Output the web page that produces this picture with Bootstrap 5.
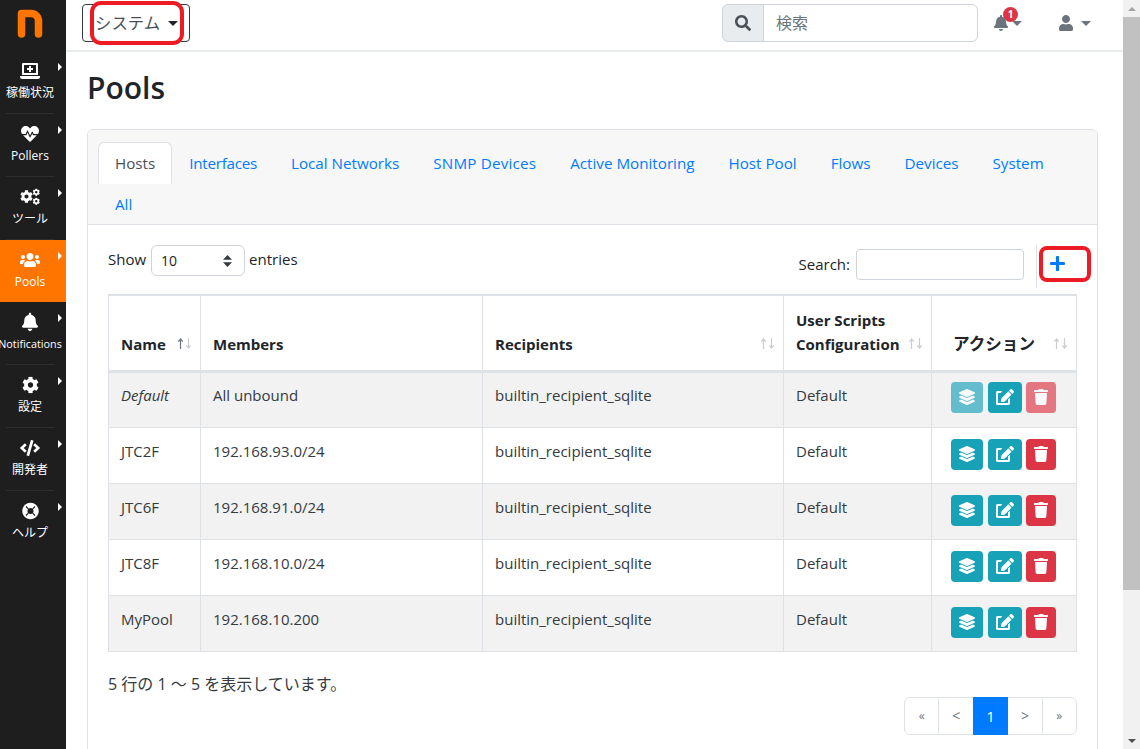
<!DOCTYPE html>
<html lang="ja">
<head>
<meta charset="utf-8">
<title>Pools</title>
<link href="https://cdn.jsdelivr.net/npm/bootstrap@5.3.0/dist/css/bootstrap.min.css" rel="stylesheet">
<style>
html,body{height:749px;overflow:hidden}
body{font-family:"Open Sans","Noto Sans CJK JP",sans-serif;font-size:15px;color:#212529;background:#fff}
a{text-decoration:none}
.shell{height:749px}
.side{width:66px;flex:none;background:#1e1e1e;color:#fff}
.logo-box{height:51px;padding-right:6px}
.side-item{height:62.85px;position:relative;color:#fff;font-size:12px;white-space:nowrap;padding:10px 6px 0 0}
.side-item::after{content:"";position:absolute;left:6px;right:12px;bottom:0;border-bottom:1px solid #2e2e2e}
.side-item:last-child::after{display:none}
.side-item.on{background:#ff7500;color:#fff}
.side-item.on::after{display:none}
.side-tri{position:absolute;left:58px;top:12px;border-left:4px solid #fff;border-top:4px solid transparent;border-bottom:4px solid transparent}
.side-ico{height:20px;margin-bottom:3px;fill:#fff}
.side-label{line-height:18px}
.side-label-long{font-size:10.8px}
.mainc{min-width:0;flex:1}
.topbar{height:52px;border-bottom:2px solid #e9ecef;padding:0 0 4px 16px;flex:none}
.sys-wrap{position:relative}
.sys-btn{width:108px;height:38px;border:1px solid #343a40;border-radius:4px;font-size:16.4px;color:#495057;padding:0 0 0 12px;background:#fff;display:flex;align-items:center;gap:8px}
.sys-btn .car{color:#212529}
.car{display:inline-block;border-top:5px solid currentColor;border-left:5px solid transparent;border-right:5px solid transparent}
.ring{position:absolute;border:4px solid #ed1c24;border-radius:11px;pointer-events:none}
.ring-sys{left:8px;top:-3px;width:94px;height:44px}
.ring-add{left:2px;top:1px;width:52px;height:36px;border-radius:8px}
.topsearch{width:256px;height:38px}
.topsearch .input-group-text{width:42px;padding:0;justify-content:center;background:#e9ecef;border-color:#ced4da}
.topsearch .form-control{font-size:16px;padding-left:12px;border-color:#ced4da}
.topsearch .form-control::placeholder{color:#6c757d}
.t-ico{fill:#6c757d}
.bell-wrap{position:relative;width:34px;margin-left:16px;color:#6c757d}
.bell-badge{position:absolute;left:9px;top:-8px;width:15px;height:15px;border-radius:50%;background:#dc3545;color:#fff;font-size:10px;font-weight:700;line-height:15px;text-align:center}
.user-wrap{margin-left:31px;margin-right:32px;color:#6c757d}
.content{padding:0 25px 0 21px;min-height:0;flex:1;overflow:hidden}
.page-h{font-size:30px;font-weight:600;line-height:38px;margin:17px 0 22px;color:#212529}
.pool-card{border-color:#dee2e6}
.pool-card .card-header{background:#f7f7f7;padding:12px 10px 0;border-color:#dee2e6}
.pool-card .nav-tabs{margin:0;border-bottom:0}
.pool-card .nav-link{padding:0 16px;height:40px;line-height:41px;font-size:15.2px;color:#007bff;margin-bottom:0;border:1px solid transparent}
.pool-card .nav-link.active{color:#495057;background:#fff;border-color:#dee2e6 #dee2e6 #fff;height:42px}
.pool-card .nav-link.tab-tight{letter-spacing:-.25px}
.pool-card .nav-link.tab-wide{letter-spacing:.2px}
.pool-card .nav-link.tab-last{line-height:39px}
.pool-body{padding:20px 21px 60px 20px}
.ctl-row{height:49px;position:relative}
.len-ctl{margin-top:-2px}
.sel10{width:94px;height:31px;font-size:14px;padding:4px 24px 4px 9px;border-color:#ced4da;display:inline-block;margin:2px 4px 0 5px;background-position:right 12px center;background-size:9px 12px;background-image:url("data:image/svg+xml,%3Csvg xmlns='http://www.w3.org/2000/svg' viewBox='0 0 9 12'%3E%3Cpath fill='%23343a40' d='M4.5 0 9 4.8H0zM4.5 12 0 7.2h9z'/%3E%3C/svg%3E")}
.right-ctl{margin-right:-13px}
.search-in{width:168px;height:31px;border:1px solid #ced4da;border-radius:4px;margin-left:6px}
.add-cell{position:relative;width:53px;height:43px;margin-left:12px;border-left:1px solid #dee2e6;display:flex;justify-content:flex-start;padding:10px 0 0 13px}
.pool-table{table-layout:fixed;width:968px;margin:0;border-color:#dee2e6;font-size:15px;border-top:2px solid #dee2e6}
.pool-table>thead>tr>th{height:76px;vertical-align:bottom;padding:0 12px 14px;line-height:24px;position:relative;font-weight:700;border-bottom:3px solid #dee2e6}
.pool-table>tbody{border-top:0}
.pool-table>tbody>tr>td{height:56px;vertical-align:top;padding:11px 12px 0;line-height:24px;color:#343a40}
.pool-table>tbody>tr>td.act{padding:11px 0 0;text-align:center}
.pool-table>tbody>tr:first-child>td{padding-top:10px}
.pool-table>tbody>tr:first-child>td.act{padding-top:9px}
.pool-table.table-striped>tbody>tr:nth-of-type(odd)>*{--bs-table-accent-bg:#f2f2f2;color:#343a40}
.w1{width:92px}.w2{width:282px}.w3{width:301px}.w4{width:148px}.w5{width:145px}
.sorts{position:absolute;right:8px;bottom:21px;width:15px;height:11px;display:flex}
.sorts svg{display:block}
.th-jp{font-size:16.6px;text-align:center;padding-right:32px!important}
.acts{display:inline-flex;gap:5px;align-items:center;margin-right:2px}
.btn-act{height:31px;padding:0;border:0;border-radius:4px;display:flex;align-items:center;justify-content:center;color:#fff}
.b-lay{width:32px;background:#17a2b8}
.b-edit{width:34px;background:#17a2b8}
.b-del{width:30px;background:#dc3545;margin-left:-1px}
.dim{opacity:.65}
.btn-act svg{fill:#fff}
.info-line{margin-top:20px;color:#343a40;line-height:24px;font-size:16px}
.pager{margin:1px -1px 0 0}
.pager .page-link{width:35.4px;height:38px;line-height:36px;text-align:center;font-size:12px;color:#6c757d;border-color:#dee2e6;padding:0;margin-left:-1px}
.pager .pg-big{font-size:14px}
.pager .active .page-link{background:#007bff;border-color:#007bff;color:#fff;font-size:15px}
.scroller{width:17px;flex:none;background:#f1f1f1}
.sc-up,.sc-dn{height:17px}
.sc-thumb{height:573px;background:#c1c1c1}
.tri-up{border-bottom:4px solid #a3a3a3;border-left:4px solid transparent;border-right:4px solid transparent}
.tri-dn{border-top:4px solid #505050;border-left:4px solid transparent;border-right:4px solid transparent}
</style>
</head>
<body>
<svg width="0" height="0" class="d-none" aria-hidden="true">
<symbol id="i-cog" viewBox="0 0 512 512"><path d="M487.4 315.7l-42.6-24.6c4.3-23.2 4.3-47 0-70.2l42.6-24.6c4.9-2.8 7.1-8.6 5.5-14-11.1-35.6-30-67.8-54.7-94.6-3.8-4.1-10-5.1-14.8-2.3L380.8 110c-17.9-15.4-38.5-27.3-60.8-35.1V25.8c0-5.6-3.9-10.5-9.4-11.7-36.7-8.2-74.3-7.8-109.2 0-5.5 1.2-9.4 6.1-9.4 11.7V75c-22.2 7.9-42.8 19.8-60.8 35.1L88.7 85.5c-4.9-2.8-11-1.9-14.8 2.3-24.7 26.7-43.6 58.9-54.7 94.6-1.7 5.4.6 11.2 5.5 14L67.3 221c-4.3 23.2-4.3 47 0 70.2l-42.6 24.6c-4.9 2.8-7.1 8.6-5.5 14 11.1 35.6 30 67.8 54.7 94.6 3.8 4.1 10 5.1 14.8 2.3l42.6-24.6c17.9 15.4 38.5 27.3 60.8 35.1v49.2c0 5.6 3.9 10.5 9.4 11.7 36.7 8.2 74.3 7.8 109.2 0 5.5-1.2 9.4-6.1 9.4-11.7v-49.2c22.2-7.9 42.8-19.8 60.8-35.1l42.6 24.6c4.9 2.8 11 1.9 14.8-2.3 24.7-26.7 43.6-58.9 54.7-94.6 1.5-5.5-.7-11.3-5.6-14.1zM256 336c-44.1 0-80-35.9-80-80s35.9-80 80-80 80 35.9 80 80-35.9 80-80 80z"/></symbol>
<symbol id="i-layer" viewBox="0 0 512 512"><path d="M12.41 148.02l232.94 105.67c6.8 3.09 14.49 3.09 21.29 0l232.94-105.67c16.55-7.51 16.55-32.52 0-40.03L266.65 2.31a25.607 25.607 0 0 0-21.29 0L12.41 107.98c-16.55 7.51-16.55 32.53 0 40.04zm487.18 88.28l-58.09-26.33-161.64 73.27c-7.56 3.43-15.59 5.17-23.86 5.17s-16.29-1.74-23.86-5.17L70.51 209.97l-58.1 26.33c-16.55 7.5-16.55 32.5 0 40l232.94 105.59c6.8 3.08 14.49 3.08 21.29 0L499.59 276.3c16.55-7.5 16.55-32.5 0-40zm0 127.8l-57.87-26.23-161.86 73.37c-7.56 3.43-15.59 5.17-23.86 5.17s-16.29-1.74-23.86-5.17L70.29 337.87 12.41 364.1c-16.55 7.5-16.55 32.5 0 40l232.94 105.59c6.8 3.08 14.49 3.08 21.29 0L499.59 404.1c16.55-7.5 16.55-32.5 0-40z"/></symbol>
<symbol id="i-edit" viewBox="0 0 576 512"><path d="M402.6 83.2l90.2 90.2c3.8 3.8 3.8 10 0 13.8L274.4 405.6l-92.8 10.3c-12.4 1.4-22.9-9.1-21.5-21.5l10.3-92.8L388.8 83.2c3.8-3.8 10-3.8 13.8 0zm162-22.9l-48.8-48.8c-15.2-15.2-39.9-15.2-55.2 0l-35.4 35.4c-3.8 3.8-3.8 10 0 13.8l90.2 90.2c3.8 3.8 10 3.8 13.8 0l35.4-35.4c15.2-15.3 15.2-40 0-55.2zM384 346.2V448H64V128h73.1c3.2 0 6.2-1.3 8.5-3.5l40-40c7.6-7.6 2.2-20.5-8.5-20.5H48C21.5 64 0 85.5 0 112v352c0 26.5 21.5 48 48 48h352c26.5 0 48-21.5 48-48V306.2c0-10.7-12.9-16-20.5-8.5l-40 40c-2.2 2.3-3.5 5.3-3.5 8.5z"/></symbol>
<symbol id="i-trash" viewBox="0 0 448 512"><path d="M432 32H312l-9.4-18.7A24 24 0 0 0 281.1 0H166.8a23.72 23.72 0 0 0-21.4 13.3L136 32H16A16 16 0 0 0 0 48v32a16 16 0 0 0 16 16h416a16 16 0 0 0 16-16V48a16 16 0 0 0-16-16zM53.2 467a48 48 0 0 0 47.9 45h245.8a48 48 0 0 0 47.9-45L416 128H32z"/></symbol>
<symbol id="i-sort" viewBox="0 0 15 11"><path d="M3.5 11V1.5M1.3 3.6 3.5 1l2.2 2.6" fill="none" stroke="currentColor" stroke-width="1.2"/><path d="M11.5 0v9.5M9.3 7.4 11.5 10l2.2-2.6" fill="none" stroke="#ccc" stroke-width="1.2"/></symbol>
</svg>
<div class="shell d-flex">
  <nav class="side d-flex flex-column">
    <div class="logo-box d-flex justify-content-center pt-2">
      <svg width="26" height="30" viewBox="0 0 26 30" aria-hidden="true"><path d="M4.5 26V5.5H14a7.5 7.5 0 0 1 7.5 7.5V26" fill="none" stroke="#ff7500" stroke-width="7.5" stroke-linecap="round" stroke-linejoin="round"/></svg>
    </div>
    <a class="side-item d-flex flex-column align-items-center" href="#"><span class="side-tri"></span>
      <svg class="side-ico" width="20" height="20" viewBox="0 0 20 20" aria-hidden="true"><path fill-rule="evenodd" d="M3 2h14a1 1 0 0 1 1 1v11H2V3a1 1 0 0 1 1-1zm1 2v8h12V4zM0 15h20v1a2 2 0 0 1-2 2H2a2 2 0 0 1-2-2z"/><path d="M9 5h2v2h2v2h-2v2H9V9H7V7h2z"/></svg>
      <span class="side-label">稼働状況</span></a>
    <a class="side-item d-flex flex-column align-items-center" href="#"><span class="side-tri"></span>
      <svg class="side-ico" width="18" height="20" viewBox="0 0 512 512" aria-hidden="true"><path d="M320.2 243.8l-49.7 99.4c-6 12.1-23.4 11.7-28.9-.6l-56.9-126.3-30 71.7H60.6l182.5 186.5c7.1 7.3 18.6 7.3 25.7 0L451.4 288H342.3l-22.1-44.2zM473.7 73.9l-2.4-2.5c-51.5-52.6-135.8-52.6-187.4 0L256 100l-27.9-28.5c-51.5-52.7-135.9-52.7-187.4 0l-2.4 2.4C-10.4 123.7-12.5 203 31 256h102.4l35.9-86.2c5.4-12.9 23.6-13.2 29.4-.4l58.2 129.3 49-97.9c5.9-11.8 22.7-11.8 28.6 0l27.6 55.2H481c43.5-53 41.4-132.3-7.3-182.1z"/></svg>
      <span class="side-label">Pollers</span></a>
    <a class="side-item d-flex flex-column align-items-center" href="#"><span class="side-tri"></span>
      <svg class="side-ico" width="20" height="20" viewBox="0 0 20 20" aria-hidden="true"><use href="#i-cog" x="0" y="3" width="13" height="13"/><use href="#i-cog" x="12.5" y="1.5" width="7.5" height="7.5"/><use href="#i-cog" x="12.5" y="10.5" width="7.5" height="7.5"/></svg>
      <span class="side-label">ツール</span></a>
    <a class="side-item on d-flex flex-column align-items-center" href="#"><span class="side-tri"></span>
      <svg class="side-ico" width="20" height="20" viewBox="0 0 640 512" aria-hidden="true"><path d="M96 224c35.3 0 64-28.7 64-64s-28.7-64-64-64-64 28.7-64 64 28.7 64 64 64zm448 0c35.3 0 64-28.7 64-64s-28.7-64-64-64-64 28.7-64 64 28.7 64 64 64zm32 32h-64c-17.6 0-33.5 7.1-45.1 18.6 40.3 22.1 68.9 62 75.1 109.4h66c17.7 0 32-14.3 32-32v-32c0-35.3-28.7-64-64-64zm-256 0c61.9 0 112-50.1 112-112S381.9 32 320 32 208 82.1 208 144s50.1 112 112 112zm76.8 32h-8.3c-20.8 10-43.9 16-68.5 16s-47.6-6-68.5-16h-8.3C179.6 288 128 339.6 128 403.2V432c0 26.5 21.5 48 48 48h288c26.5 0 48-21.5 48-48v-28.8c0-63.6-51.6-115.2-115.2-115.2zm-223.7-13.4C161.5 263.1 145.6 256 128 256H64c-35.3 0-64 28.7-64 64v32c0 17.7 14.3 32 32 32h65.9c6.3-47.4 34.9-87.3 75.2-109.4z"/></svg>
      <span class="side-label">Pools</span></a>
    <a class="side-item d-flex flex-column align-items-center" href="#"><span class="side-tri"></span>
      <svg class="side-ico" width="16" height="20" viewBox="0 0 448 512" aria-hidden="true"><path d="M224 512c35.32 0 63.97-28.65 63.97-64H160.03c0 35.35 28.65 64 63.97 64zm215.39-149.71c-19.32-20.76-55.47-51.99-55.47-154.29 0-77.7-54.48-139.9-127.94-155.16V32c0-17.67-14.32-32-31.98-32s-31.98 14.33-31.98 32v20.84C118.56 68.1 64.08 130.3 64.08 208c0 102.3-36.15 133.53-55.47 154.29-6 6.45-8.66 14.16-8.61 21.71.11 16.4 12.98 32 32.1 32h383.8c19.12 0 32-15.6 32.1-32 .05-7.55-2.61-15.27-8.61-21.71z"/></svg>
      <span class="side-label side-label-long">Notifications</span></a>
    <a class="side-item d-flex flex-column align-items-center" href="#"><span class="side-tri"></span>
      <svg class="side-ico" width="17" height="20" viewBox="0 0 512 512" aria-hidden="true"><use href="#i-cog"/></svg>
      <span class="side-label">設定</span></a>
    <a class="side-item d-flex flex-column align-items-center" href="#"><span class="side-tri"></span>
      <svg class="side-ico" width="20" height="20" viewBox="0 0 640 512" aria-hidden="true"><path d="M278.9 511.5l-61-17.7c-6.4-1.8-10-8.5-8.2-14.9L346.2 8.7c1.8-6.4 8.5-10 14.9-8.2l61 17.7c6.4 1.8 10 8.5 8.2 14.9L293.8 503.3c-1.9 6.4-8.5 10.1-14.9 8.2zm-114-112.2l43.5-46.4c4.6-4.9 4.3-12.7-.8-17.2L117 256l90.6-79.7c5.1-4.5 5.5-12.3.8-17.2l-43.5-46.4c-4.5-4.8-12.1-5.1-17-.5L3.8 247.2c-5.1 4.7-5.1 12.8 0 17.5l144.1 135.1c4.9 4.6 12.5 4.4 17-.5zm327.2.6l144.1-135.1c5.1-4.7 5.1-12.8 0-17.5L492.1 112.1c-4.8-4.5-12.4-4.3-17 .5L431.6 159c-4.6 4.9-4.3 12.7.8 17.2L523 256l-90.6 79.7c-5.1 4.5-5.5 12.3-.8 17.2l43.5 46.4c4.5 4.9 12.1 5.1 17 .6z"/></svg>
      <span class="side-label">開発者</span></a>
    <a class="side-item d-flex flex-column align-items-center" href="#"><span class="side-tri"></span>
      <svg class="side-ico" width="17" height="20" viewBox="0 0 512 512" aria-hidden="true"><path fill-rule="evenodd" d="M256 8C119 8 8 119 8 256s111 248 248 248 248-111 248-248S393 8 256 8zm0 156a92 92 0 1 1 0 184 92 92 0 0 1 0-184z"/><path d="M120 120l70 70M392 120l-70 70M120 392l70-70M392 392l-70-70" stroke="#1e1e1e" stroke-width="36" fill="none"/></svg>
      <span class="side-label">ヘルプ</span></a>
  </nav>
  <div class="mainc d-flex flex-column">
    <header class="topbar d-flex align-items-center">
      <div class="sys-wrap">
        <button class="sys-btn" type="button">システム<span class="car"></span></button>
        <span class="ring ring-sys"></span>
      </div>
      <div class="input-group topsearch ms-auto">
        <span class="input-group-text"><svg width="16" height="16" viewBox="0 0 512 512" aria-hidden="true"><path fill="#495057" d="M505 442.7L405.3 343c-4.5-4.5-10.6-7-17-7H372c27.6-35.3 44-79.7 44-128C416 93.1 322.9 0 208 0S0 93.1 0 208s93.1 208 208 208c48.3 0 92.7-16.4 128-44v16.3c0 6.4 2.5 12.5 7 17l99.7 99.7c9.4 9.4 24.6 9.4 33.9 0l28.3-28.3c9.4-9.4 9.4-24.6.1-34zM208 336c-70.7 0-128-57.2-128-128 0-70.7 57.2-128 128-128 70.7 0 128 57.2 128 128 0 70.7-57.2 128-128 128z"/></svg></span>
        <input class="form-control" type="text" placeholder="検索">
      </div>
      <div class="bell-wrap d-flex align-items-center gap-1">
        <svg class="t-ico" width="14" height="16" viewBox="0 0 448 512" aria-hidden="true"><path d="M224 512c35.32 0 63.97-28.65 63.97-64H160.03c0 35.35 28.65 64 63.97 64zm215.39-149.71c-19.32-20.76-55.47-51.99-55.47-154.29 0-77.7-54.48-139.9-127.94-155.16V32c0-17.67-14.32-32-31.98-32s-31.98 14.33-31.98 32v20.84C118.56 68.1 64.08 130.3 64.08 208c0 102.3-36.15 133.53-55.47 154.29-6 6.45-8.66 14.16-8.61 21.71.11 16.4 12.98 32 32.1 32h383.8c19.12 0 32-15.6 32.1-32 .05-7.55-2.61-15.27-8.61-21.71z"/></svg>
        <span class="car"></span>
        <span class="bell-badge">1</span>
      </div>
      <div class="user-wrap d-flex align-items-center gap-2">
        <svg class="t-ico" width="14" height="16" viewBox="0 0 448 512" aria-hidden="true"><path d="M224 256c70.7 0 128-57.3 128-128S294.7 0 224 0 96 57.3 96 128s57.3 128 128 128zm89.6 32h-16.7c-22.2 10.2-46.9 16-72.9 16s-50.6-5.8-72.9-16h-16.7C60.2 288 0 348.2 0 422.4V464c0 26.5 21.5 48 48 48h352c26.5 0 48-21.5 48-48v-41.6c0-74.2-60.2-134.4-134.4-134.4z"/></svg>
        <span class="car"></span>
      </div>
    </header>
    <main class="content">
      <h1 class="page-h">Pools</h1>
      <div class="card pool-card">
        <div class="card-header">
          <ul class="nav nav-tabs">
            <li class="nav-item"><a class="nav-link active" href="#">Hosts</a></li>
            <li class="nav-item"><a class="nav-link tab-tight" href="#">Interfaces</a></li>
            <li class="nav-item"><a class="nav-link" href="#">Local Networks</a></li>
            <li class="nav-item"><a class="nav-link tab-wide" href="#">SNMP Devices</a></li>
            <li class="nav-item"><a class="nav-link" href="#">Active Monitoring</a></li>
            <li class="nav-item"><a class="nav-link" href="#">Host Pool</a></li>
            <li class="nav-item"><a class="nav-link" href="#">Flows</a></li>
            <li class="nav-item"><a class="nav-link" href="#">Devices</a></li>
            <li class="nav-item"><a class="nav-link" href="#">System</a></li>
            <li class="nav-item"><a class="nav-link tab-last" href="#">All</a></li>
          </ul>
        </div>
        <div class="pool-body">
          <div class="ctl-row d-flex justify-content-between align-items-start">
            <div class="d-flex align-items-center len-ctl">Show <select class="form-select sel10"><option>10</option></select> entries</div>
            <div class="d-flex align-items-start right-ctl">
              <label class="d-flex align-items-center mt-1">Search:<input class="search-in" type="text"></label>
              <div class="add-cell">
                <svg width="15" height="17" viewBox="0 0 448 512" aria-hidden="true"><path fill="#007bff" d="M416 208H272V64c0-17.67-14.33-32-32-32h-32c-17.67 0-32 14.33-32 32v144H32c-17.67 0-32 14.33-32 32v32c0 17.67 14.33 32 32 32h144v144c0 17.67 14.33 32 32 32h32c17.67 0 32-14.33 32-32V304h144c17.67 0 32-14.33 32-32v-32c0-17.67-14.33-32-32-32z"/></svg>
                <span class="ring ring-add"></span>
              </div>
            </div>
          </div>
          <table class="table table-bordered table-striped pool-table">
            <thead>
              <tr>
                <th class="w1">Name<span class="sorts"><svg width="15" height="11" class="text-secondary" aria-hidden="true"><use href="#i-sort"/></svg></span></th>
                <th class="w2">Members</th>
                <th class="w3">Recipients<span class="sorts"><svg width="15" height="11" aria-hidden="true" color="#ccc"><use href="#i-sort"/></svg></span></th>
                <th class="w4">User Scripts Configuration<span class="sorts"><svg width="15" height="11" aria-hidden="true" color="#ccc"><use href="#i-sort"/></svg></span></th>
                <th class="w5 th-jp">アクション<span class="sorts"><svg width="15" height="11" aria-hidden="true" color="#ccc"><use href="#i-sort"/></svg></span></th>
              </tr>
            </thead>
            <tbody>
              <tr><td><i>Default</i></td><td>All unbound</td><td>builtin_recipient_sqlite</td><td>Default</td>
                <td class="act"><div class="acts">
                  <button class="btn-act b-lay dim" type="button"><svg width="16" height="16" aria-hidden="true"><use href="#i-layer"/></svg></button>
                  <button class="btn-act b-edit" type="button"><svg width="18" height="16" aria-hidden="true"><use href="#i-edit"/></svg></button>
                  <button class="btn-act b-del dim" type="button"><svg width="14" height="16" aria-hidden="true"><use href="#i-trash"/></svg></button>
                </div></td></tr>
              <tr><td>JTC2F</td><td>192.168.93.0/24</td><td>builtin_recipient_sqlite</td><td>Default</td>
                <td class="act"><div class="acts">
                  <button class="btn-act b-lay" type="button"><svg width="16" height="16" aria-hidden="true"><use href="#i-layer"/></svg></button>
                  <button class="btn-act b-edit" type="button"><svg width="18" height="16" aria-hidden="true"><use href="#i-edit"/></svg></button>
                  <button class="btn-act b-del" type="button"><svg width="14" height="16" aria-hidden="true"><use href="#i-trash"/></svg></button>
                </div></td></tr>
              <tr><td>JTC6F</td><td>192.168.91.0/24</td><td>builtin_recipient_sqlite</td><td>Default</td>
                <td class="act"><div class="acts">
                  <button class="btn-act b-lay" type="button"><svg width="16" height="16" aria-hidden="true"><use href="#i-layer"/></svg></button>
                  <button class="btn-act b-edit" type="button"><svg width="18" height="16" aria-hidden="true"><use href="#i-edit"/></svg></button>
                  <button class="btn-act b-del" type="button"><svg width="14" height="16" aria-hidden="true"><use href="#i-trash"/></svg></button>
                </div></td></tr>
              <tr><td>JTC8F</td><td>192.168.10.0/24</td><td>builtin_recipient_sqlite</td><td>Default</td>
                <td class="act"><div class="acts">
                  <button class="btn-act b-lay" type="button"><svg width="16" height="16" aria-hidden="true"><use href="#i-layer"/></svg></button>
                  <button class="btn-act b-edit" type="button"><svg width="18" height="16" aria-hidden="true"><use href="#i-edit"/></svg></button>
                  <button class="btn-act b-del" type="button"><svg width="14" height="16" aria-hidden="true"><use href="#i-trash"/></svg></button>
                </div></td></tr>
              <tr><td>MyPool</td><td>192.168.10.200</td><td>builtin_recipient_sqlite</td><td>Default</td>
                <td class="act"><div class="acts">
                  <button class="btn-act b-lay" type="button"><svg width="16" height="16" aria-hidden="true"><use href="#i-layer"/></svg></button>
                  <button class="btn-act b-edit" type="button"><svg width="18" height="16" aria-hidden="true"><use href="#i-edit"/></svg></button>
                  <button class="btn-act b-del" type="button"><svg width="14" height="16" aria-hidden="true"><use href="#i-trash"/></svg></button>
                </div></td></tr>
            </tbody>
          </table>
          <div class="info-line">5 行の 1 〜 5 を表示しています。</div>
          <div class="d-flex justify-content-end">
            <ul class="pagination pager">
              <li class="page-item"><a class="page-link" href="#">«</a></li>
              <li class="page-item"><a class="page-link pg-big" href="#">&lt;</a></li>
              <li class="page-item active"><a class="page-link" href="#">1</a></li>
              <li class="page-item"><a class="page-link pg-big" href="#">&gt;</a></li>
              <li class="page-item"><a class="page-link" href="#">»</a></li>
            </ul>
          </div>
        </div>
      </div>
    </main>
  </div>
  <div class="scroller d-flex flex-column">
    <div class="sc-up d-flex align-items-center justify-content-center"><span class="tri-up"></span></div>
    <div class="sc-thumb"></div>
    <div class="sc-dn mt-auto d-flex align-items-center justify-content-center"><span class="tri-dn"></span></div>
  </div>
</div>
</body>
</html>
